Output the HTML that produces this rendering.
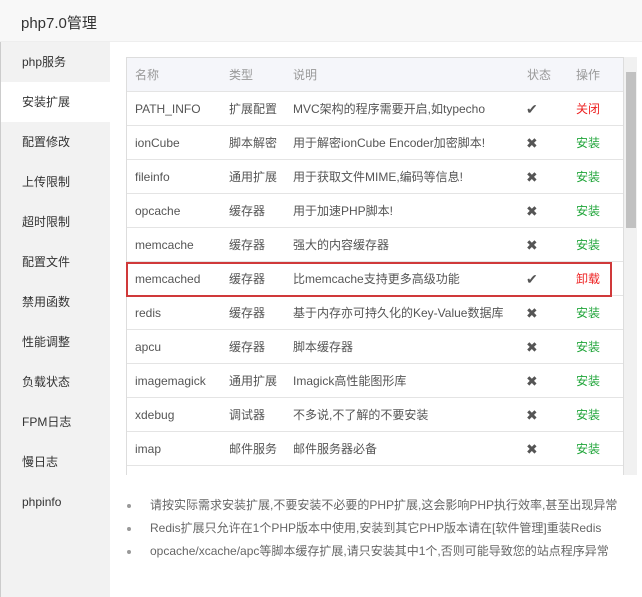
<!DOCTYPE html>
<html><head><meta charset="utf-8"><style>
*{margin:0;padding:0;box-sizing:border-box}
body{width:642px;height:597px;overflow:hidden;background:#fff;font-family:"Liberation Sans","Noto Sans CJK SC",sans-serif;color:#555;position:relative}
.hd{position:absolute;left:0;top:0;width:642px;height:42px;background:#f8f8f8;border-bottom:1px solid #eee;font-size:15px;color:#333;padding:12px 0 0 21px}
.sb{position:absolute;left:0;top:42px;width:110px;height:555px;background:#f2f2f2;border-left:1px solid #ccc}
.sb div{height:40px;line-height:40px;padding-left:21px;font-size:12px;color:#333}
.sb .on{background:#fff}
.tb{position:absolute;left:126px;top:57px;width:498px;height:418px;border:1px solid #ddd;border-bottom:none;overflow:hidden}
.row{height:34px;border-bottom:1px solid #e4e4e4;position:relative;font-size:12px;line-height:34px;color:#555}
.row span{position:absolute;top:0}
.th{background:#f5f6fa;color:#999}
.c1{left:8px}.c2{left:102px}.c3{left:166px}.c4{left:400px}.c5{left:449px}
.row .ic{font-size:14px;color:#555;left:399px}
.g{color:#20a53a}.r{color:#e22}
.sc{position:absolute;left:624px;top:57px;width:13px;height:418px;background:#f1f1f1}
.th2{position:absolute;left:626px;top:72px;width:10px;height:156px;background:#c1c1c1}
.hl{position:absolute;left:126px;top:262px;width:486px;height:35px;border:2px solid #d0393a}
ul{position:absolute;left:126px;top:495px;list-style:none;font-size:12px;color:#666}
li{height:23px;line-height:20px;position:relative;padding-left:24px}
li:before{content:"";position:absolute;left:1px;top:9px;width:4px;height:4px;border-radius:50%;background:#999}
</style></head><body>
<div class="hd">php7.0管理</div>
<div class="sb"><div>php服务</div><div class="on">安装扩展</div><div>配置修改</div><div>上传限制</div><div>超时限制</div><div>配置文件</div><div>禁用函数</div><div>性能调整</div><div>负载状态</div><div>FPM日志</div><div>慢日志</div><div>phpinfo</div></div>
<div class="tb">
<div class="row th"><span class="c1">名称</span><span class="c2">类型</span><span class="c3">说明</span><span class="c4">状态</span><span class="c5">操作</span></div>
<div class="row"><span class="c1">PATH_INFO</span><span class="c2">扩展配置</span><span class="c3">MVC架构的程序需要开启,如typecho</span><span class="ic">✔</span><span class="c5 r">关闭</span></div>
<div class="row"><span class="c1">ionCube</span><span class="c2">脚本解密</span><span class="c3">用于解密ionCube Encoder加密脚本!</span><span class="ic">✖</span><span class="c5 g">安装</span></div>
<div class="row"><span class="c1">fileinfo</span><span class="c2">通用扩展</span><span class="c3">用于获取文件MIME,编码等信息!</span><span class="ic">✖</span><span class="c5 g">安装</span></div>
<div class="row"><span class="c1">opcache</span><span class="c2">缓存器</span><span class="c3">用于加速PHP脚本!</span><span class="ic">✖</span><span class="c5 g">安装</span></div>
<div class="row"><span class="c1">memcache</span><span class="c2">缓存器</span><span class="c3">强大的内容缓存器</span><span class="ic">✖</span><span class="c5 g">安装</span></div>
<div class="row"><span class="c1">memcached</span><span class="c2">缓存器</span><span class="c3">比memcache支持更多高级功能</span><span class="ic">✔</span><span class="c5 r">卸载</span></div>
<div class="row"><span class="c1">redis</span><span class="c2">缓存器</span><span class="c3">基于内存亦可持久化的Key-Value数据库</span><span class="ic">✖</span><span class="c5 g">安装</span></div>
<div class="row"><span class="c1">apcu</span><span class="c2">缓存器</span><span class="c3">脚本缓存器</span><span class="ic">✖</span><span class="c5 g">安装</span></div>
<div class="row"><span class="c1">imagemagick</span><span class="c2">通用扩展</span><span class="c3">Imagick高性能图形库</span><span class="ic">✖</span><span class="c5 g">安装</span></div>
<div class="row"><span class="c1">xdebug</span><span class="c2">调试器</span><span class="c3">不多说,不了解的不要安装</span><span class="ic">✖</span><span class="c5 g">安装</span></div>
<div class="row"><span class="c1">imap</span><span class="c2">邮件服务</span><span class="c3">邮件服务器必备</span><span class="ic">✖</span><span class="c5 g">安装</span></div>
</div>
<div class="sc"></div><div class="th2"></div>
<div class="hl"></div>
<ul><li>请按实际需求安装扩展,不要安装不必要的PHP扩展,这会影响PHP执行效率,甚至出现异常</li><li>Redis扩展只允许在1个PHP版本中使用,安装到其它PHP版本请在[软件管理]重装Redis</li><li>opcache/xcache/apc等脚本缓存扩展,请只安装其中1个,否则可能导致您的站点程序异常</li></ul>
</body></html>
